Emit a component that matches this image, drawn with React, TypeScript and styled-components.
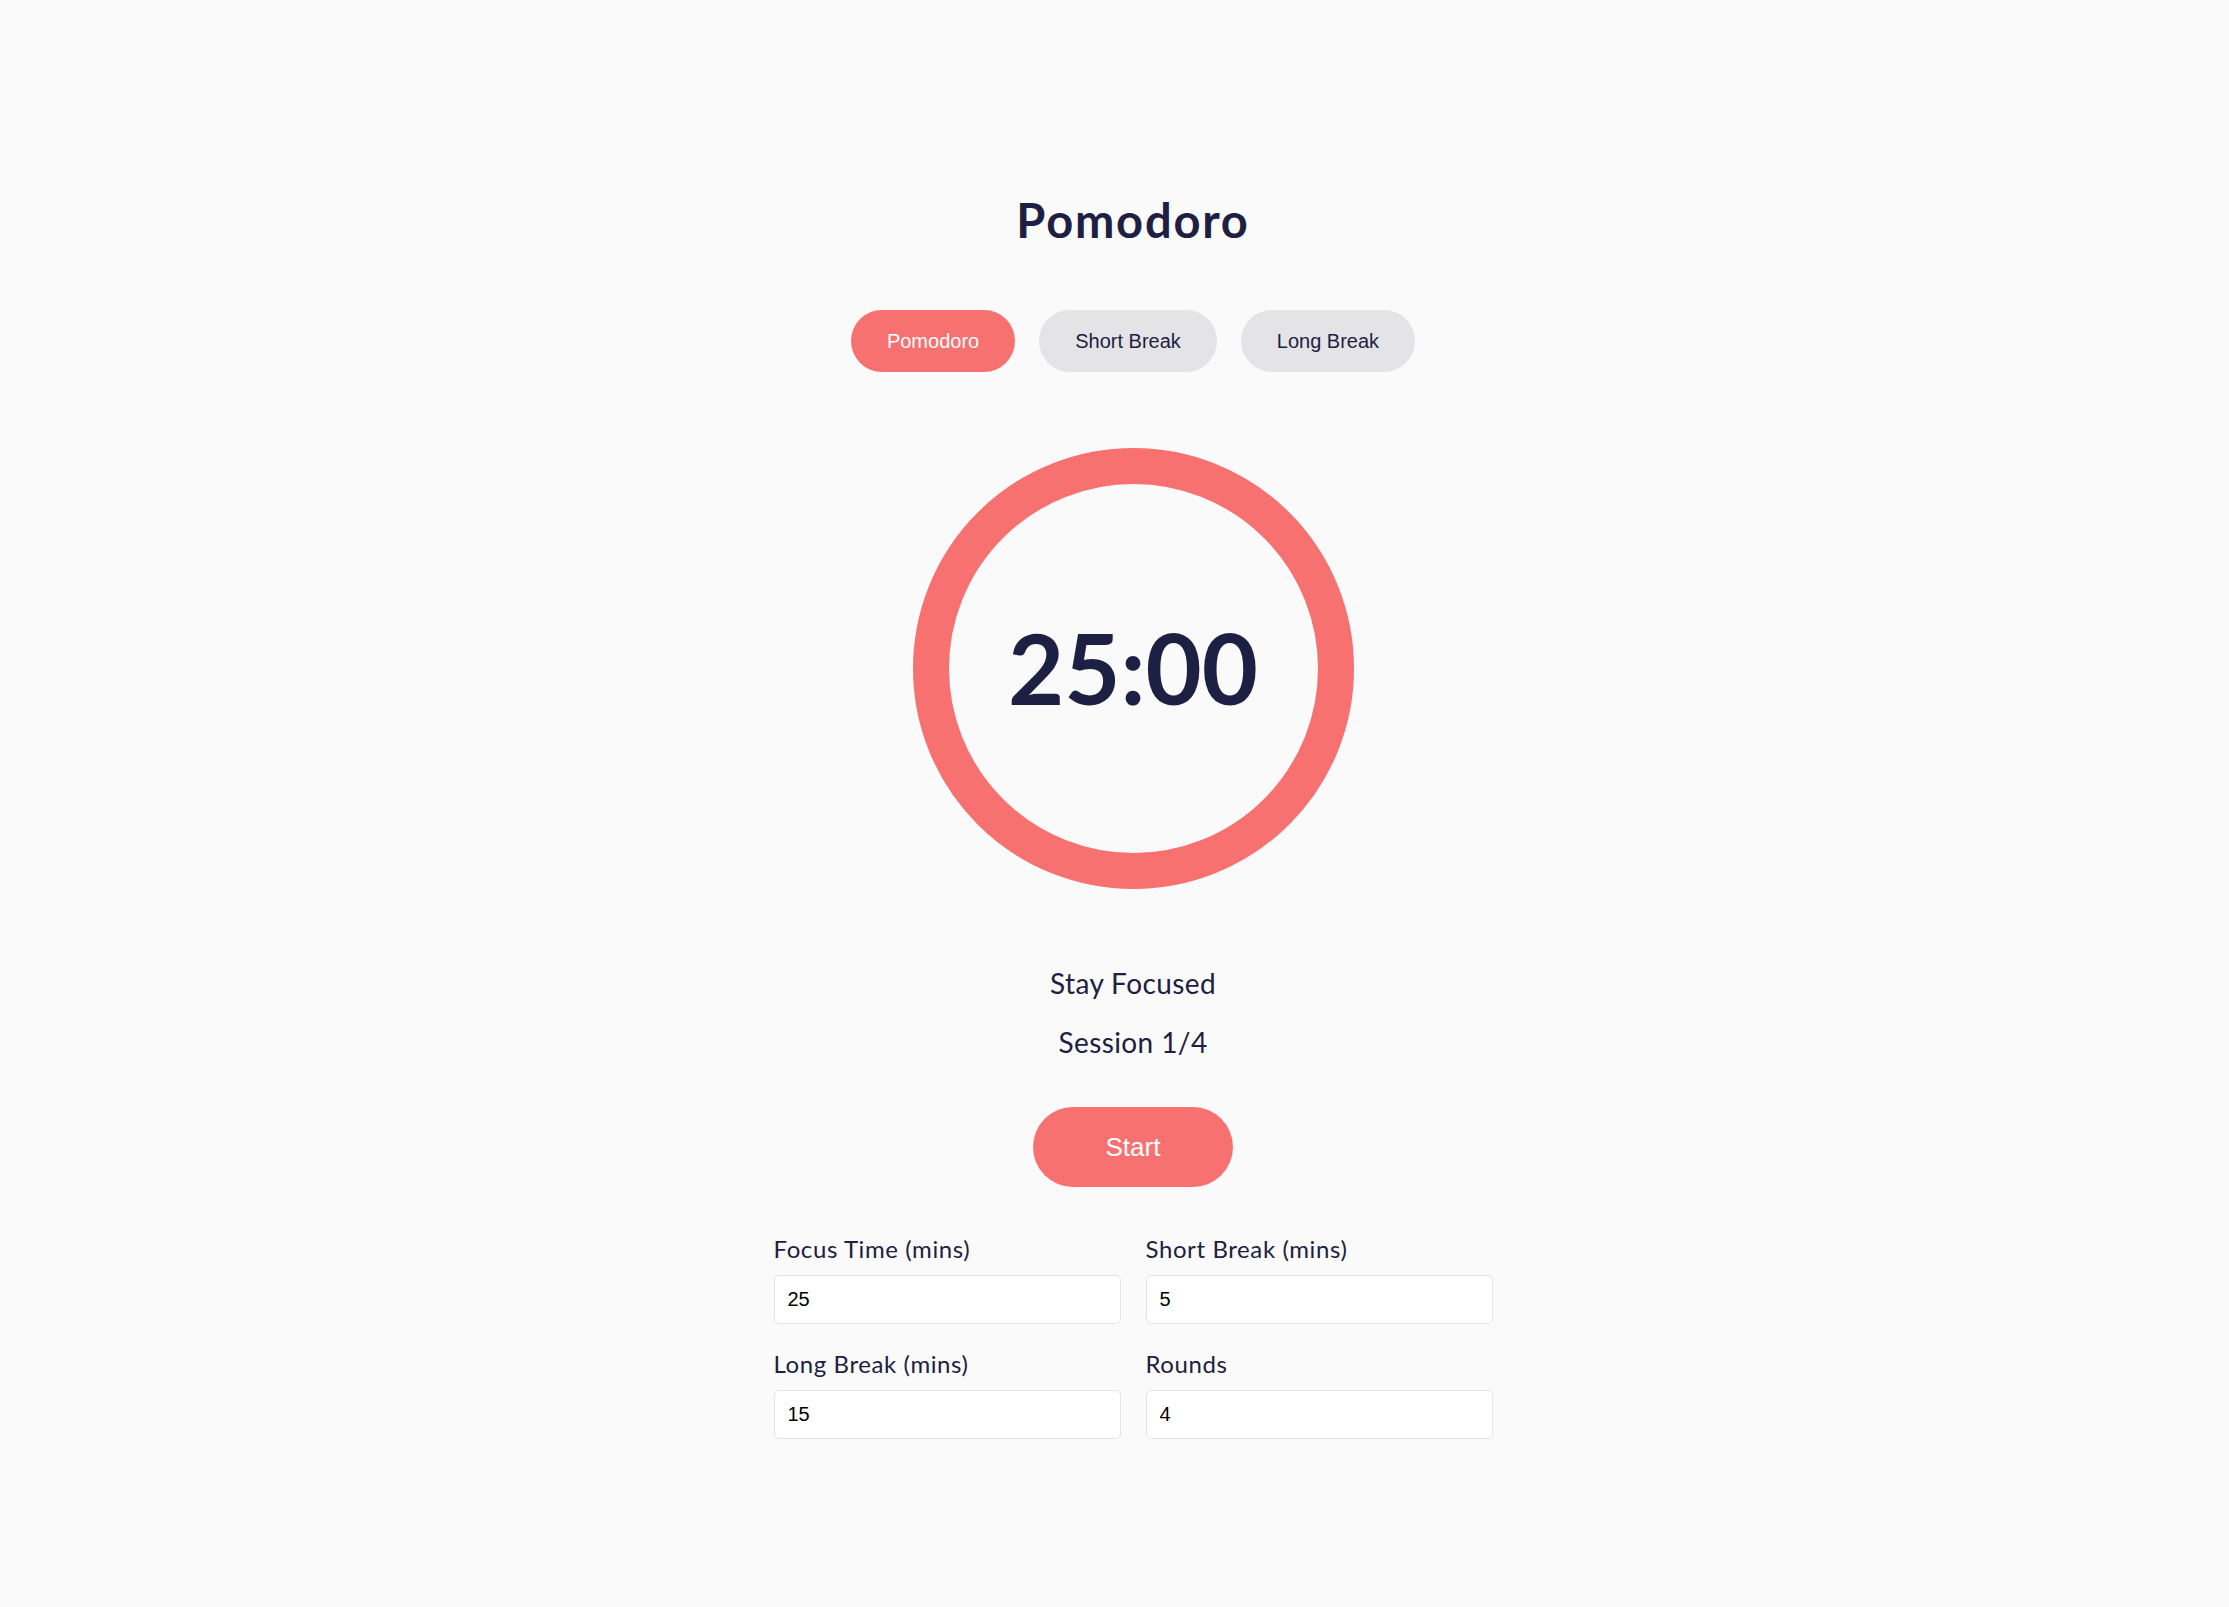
import React, { useState } from "react";
import styled, { createGlobalStyle } from "styled-components";

const GlobalStyle = createGlobalStyle`
  html, body {
    margin: 0;
    padding: 0;
    background: #fafafa;
  }
  body {
    font-family: Lato, "Noto Sans", sans-serif;
    color: #1e2043;
  }
  * { box-sizing: border-box; }
`;

const Page = styled.main`
  min-height: 1607px;
  padding: 192px 0 0 37px;
  display: flex;
  flex-direction: column;
  align-items: center;
`;

const Title = styled.h1`
  margin: 0;
  font-family: Lato, sans-serif;
  font-weight: 700;
  font-size: 47px;
  line-height: 56px;
  letter-spacing: 1.8px;
  color: #1e2043;
`;

const Tabs = styled.div`
  margin-top: 62px;
  display: flex;
  gap: 24px;
`;

const Tab = styled.button<{ $active?: boolean }>`
  height: 62px;
  padding: 0 36px;
  border: none;
  border-radius: 31px;
  font-family: "Liberation Sans", Arial, sans-serif;
  font-size: 20px;
  cursor: pointer;
  background: ${(p) => (p.$active ? "#f87171" : "#e4e4e7")};
  color: ${(p) => (p.$active ? "#ffffff" : "#1e2043")};
`;

const Ring = styled.div`
  margin-top: 76px;
  width: 441px;
  height: 441px;
  border-radius: 50%;
  border: 36px solid #f87171;
  display: flex;
  align-items: center;
  justify-content: center;
`;

const Time = styled.div`
  font-family: Lato, sans-serif;
  font-weight: 700;
  font-size: 97px;
  line-height: 1;
  padding-bottom: 2px;
  color: #1e2043;
`;

const Status = styled.div`
  margin-top: 74px;
  display: flex;
  flex-direction: column;
  align-items: center;
  gap: 19px;
`;

const StatusText = styled.p`
  margin: 0;
  font-size: 28px;
  line-height: 40px;
  letter-spacing: 0.4px;
  color: #1e2043;
`;

const StartButton = styled.button`
  margin-top: 45px;
  width: 200px;
  height: 80px;
  border: none;
  border-radius: 40px;
  background: #f87171;
  color: #ffffff;
  font-family: "Liberation Sans", Arial, sans-serif;
  font-size: 26px;
  cursor: pointer;
`;

const Settings = styled.div`
  margin-top: 47px;
  display: grid;
  grid-template-columns: 347px 347px;
  column-gap: 25px;
  row-gap: 25px;
`;

const Field = styled.label`
  display: flex;
  flex-direction: column;
  gap: 11px;
`;

const FieldLabel = styled.span`
  font-size: 24px;
  line-height: 30px;
  letter-spacing: 0.6px;
  color: #1e2043;
`;

const Input = styled.input`
  width: 100%;
  height: 49px;
  padding: 0 13px;
  border: 1px solid #e4e4e7;
  border-radius: 5px;
  background: #ffffff;
  font-family: "Liberation Sans", Arial, sans-serif;
  font-size: 20px;
  color: #000000;
  outline: none;
`;

const modes = ["Pomodoro", "Short Break", "Long Break"];

export default function App() {
  const [mode, setMode] = useState("Pomodoro");
  const [focus, setFocus] = useState("25");
  const [shortB, setShortB] = useState("5");
  const [longB, setLongB] = useState("15");
  const [rounds, setRounds] = useState("4");

  return (
    <>
      <GlobalStyle />
      <Page>
        <Title>Pomodoro</Title>
        <Tabs>
          {modes.map((m) => (
            <Tab key={m} $active={m === mode} onClick={() => setMode(m)}>
              {m}
            </Tab>
          ))}
        </Tabs>
        <Ring>
          <Time>25:00</Time>
        </Ring>
        <Status>
          <StatusText>Stay Focused</StatusText>
          <StatusText>Session 1/4</StatusText>
        </Status>
        <StartButton>Start</StartButton>
        <Settings>
          <Field>
            <FieldLabel>Focus Time (mins)</FieldLabel>
            <Input type="number" value={focus} onChange={(e) => setFocus(e.target.value)} />
          </Field>
          <Field>
            <FieldLabel>Short Break (mins)</FieldLabel>
            <Input type="number" value={shortB} onChange={(e) => setShortB(e.target.value)} />
          </Field>
          <Field>
            <FieldLabel>Long Break (mins)</FieldLabel>
            <Input type="number" value={longB} onChange={(e) => setLongB(e.target.value)} />
          </Field>
          <Field>
            <FieldLabel>Rounds</FieldLabel>
            <Input type="number" value={rounds} onChange={(e) => setRounds(e.target.value)} />
          </Field>
        </Settings>
      </Page>
    </>
  );
}
